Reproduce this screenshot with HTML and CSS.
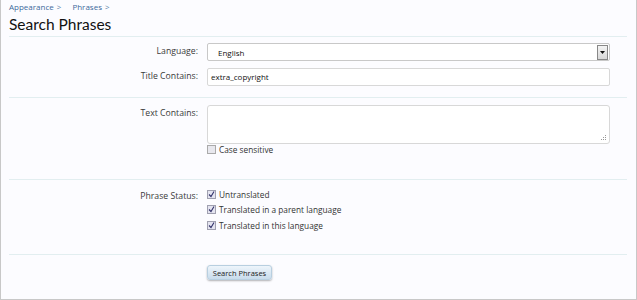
FILE: index.html
```
<!DOCTYPE html>
<html lang="en">

<head>
    <meta charset="UTF-8">
    <title>Search Phrases</title>
    <link rel="stylesheet" href="styles.css">
</head>

<body>

    <div class="frame">
        <div class="breadcrumb">
            <a href="#">Appearance</a><span class="sep">&gt;</span>
            <a href="#">Phrases</a><span class="sep">&gt;</span>
        </div>
        <h1 class="title">Search Phrases</h1>

        <div class="section first">
            <div class="row">
                <label class="label">Language:</label>
                <div class="control">
                    <div class="select">
                        <span class="select-text">English</span>
                        <span class="select-arrow">
                            <svg width="5" height="3" viewBox="0 0 5 3"><path d="M0 0H5L2.5 3Z" fill="#111"/></svg>
                        </span>
                    </div>
                </div>
            </div>
            <div class="row">
                <label class="label">Title Contains:</label>
                <div class="control">
                    <div class="textbox">extra_copyright</div>
                </div>
            </div>
        </div>

        <div class="section second">
            <div class="row">
                <label class="label">Text Contains:</label>
                <div class="control">
                    <div class="textarea">
                        <svg class="grip" width="6" height="6" viewBox="0 0 6 6">
                            <rect x="4" y="0" width="1" height="1" fill="#999"/>
                            <rect x="2" y="2" width="1" height="1" fill="#999"/>
                            <rect x="4" y="2" width="1" height="1" fill="#999"/>
                            <rect x="0" y="4" width="1" height="1" fill="#999"/>
                            <rect x="2" y="4" width="1" height="1" fill="#999"/>
                            <rect x="4" y="4" width="1" height="1" fill="#999"/>
                        </svg>
                    </div>
                    <div class="check-row">
                        <span class="box"></span>
                        <span>Case sensitive</span>
                    </div>
                </div>
            </div>
        </div>

        <div class="section third">
            <div class="row">
                <label class="label">Phrase Status:</label>
                <div class="control checks">
                    <div class="check-row">
                        <span class="box checked"><svg width="7" height="7" viewBox="0 0 7 7"><path d="M1 3.5L3 5.5L6 0.5" stroke="#33336a" stroke-width="1.1" fill="none"/></svg></span>
                        <span>Untranslated</span>
                    </div>
                    <div class="check-row">
                        <span class="box checked"><svg width="7" height="7" viewBox="0 0 7 7"><path d="M1 3.5L3 5.5L6 0.5" stroke="#33336a" stroke-width="1.1" fill="none"/></svg></span>
                        <span>Translated in a parent language</span>
                    </div>
                    <div class="check-row">
                        <span class="box checked"><svg width="7" height="7" viewBox="0 0 7 7"><path d="M1 3.5L3 5.5L6 0.5" stroke="#33336a" stroke-width="1.1" fill="none"/></svg></span>
                        <span>Translated in this language</span>
                    </div>
                </div>
            </div>
        </div>

        <div class="submit">
            <div class="spacer"></div>
            <button class="button">Search Phrases</button>
        </div>
    </div>

</body>

</html>
```
FILE: styles.css
```
body {
    margin: 0;
    padding: 0;
    background-color: #ffffff;
    font-family: "Open Sans", "Liberation Sans", sans-serif;
    color: #222;
}

.frame {
    box-sizing: border-box;
    width: 637px;
    height: 300px;
    background-color: #fcfcff;
    border: 1px solid #c8c8c8;
    border-top: none;
    padding: 0 9px 0 8px;
}

.breadcrumb {
    font-size: 8px;
    color: #5a7fa6;
    padding-top: 1px;
    height: 11px;
    line-height: 11px;
}

.breadcrumb a {
    color: #3d6a9c;
    text-decoration: none;
}

.breadcrumb .sep {
    margin: 0 9px 0 3px;
}

.title {
    margin: 0;
    font-family: Lato, "Open Sans", sans-serif;
    font-weight: normal;
    font-size: 15.5px;
    line-height: 24px;
    height: 24px;
    color: #111;
    border-bottom: 1px solid #e2eef0;
}

.section {
    border-bottom: 1px solid #e2eef0;
}

.section.first {
    padding: 6px 0 11px;
}

.section.second {
    padding: 7px 0 21px;
}

.section.third {
    padding: 8px 0 21px;
}

.row {
    display: flex;
    gap: 9px;
}

.row + .row {
    margin-top: 7px;
}

.label {
    width: 189px;
    text-align: right;
    font-size: 8.7px;
    color: #3a3a3a;
    line-height: 17px;
    flex-shrink: 0;
}

.control {
    width: 403px;
    font-size: 8px;
}

.select {
    box-sizing: border-box;
    height: 18px;
    background: #fff;
    border: 1px solid #c8c8c8;
    border-radius: 2px;
    display: flex;
    align-items: center;
    justify-content: space-between;
    padding-left: 10px;
    padding-right: 1px;
}

.select-text {
    color: #111;
}

.select-arrow {
    box-sizing: border-box;
    width: 11px;
    height: 15px;
    border: 1px solid #888;
    background: linear-gradient(#f4f4f4, #d8d8d8);
    display: flex;
    align-items: center;
    justify-content: center;
}

.textbox {
    box-sizing: border-box;
    height: 18px;
    background: #fff;
    border: 1px solid #d8d8d8;
    border-radius: 2px;
    padding-left: 3px;
    line-height: 16px;
    color: #111;
}

.textarea {
    box-sizing: border-box;
    position: relative;
    height: 39px;
    background: #fff;
    border: 1px solid #d8d8d8;
    border-radius: 3px;
}

.grip {
    position: absolute;
    right: 2px;
    bottom: 2px;
}

.check-row {
    display: flex;
    align-items: center;
    gap: 3px;
    height: 15.5px;
    font-size: 8.3px;
    color: #333;
}

.second .check-row {
    margin-top: -2px;
}

.checks {
    margin-top: -1px;
}

.box {
    box-sizing: border-box;
    width: 9px;
    height: 9px;
    border: 1px solid #aaa;
    background: #e8e8ee;
    display: flex;
    align-items: center;
    justify-content: center;
}

.box.checked {
    background: #e4e4f0;
    border-color: #a0a0b0;
}

.submit {
    display: flex;
    gap: 9px;
    padding-top: 10px;
}

.spacer {
    width: 189px;
}

.button {
    width: 65px;
    height: 15px;
    padding: 0;
    font-family: "Open Sans", "Liberation Sans", sans-serif;
    font-size: 7.5px;
    color: #222;
    border: 1px solid #b8cfe0;
    border-radius: 3px;
    background: linear-gradient(#eef5fb, #c8dcec);
    box-shadow: 0 1px 2px rgba(0, 0, 0, 0.3);
}
```
